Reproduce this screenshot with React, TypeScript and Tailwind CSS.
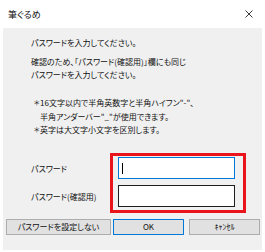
const font = "font-['Noto_Sans_CJK_JP',sans-serif] [font-feature-settings:'palt']";

const Field = ({ label, active }: { label: string; active?: boolean }) => (
  <div className="flex items-center">
    <span className="w-[87px] whitespace-nowrap">{label}</span>
    <div
      className={`w-[117px] h-[22px] bg-white flex items-center pl-[3px] ${
        active ? "border border-[#0078d7]" : "border border-[#1e1e1e]"
      }`}
    >
      {active && <span className="block w-px h-[11px] bg-black" />}
    </div>
  </div>
);

const Btn = ({ children, w, primary }: { children: React.ReactNode; w: string; primary?: boolean }) => (
  <button
    className={`${w} h-[16px] bg-[#e1e1e1] flex items-center justify-center text-[8px] leading-none ${
      primary ? "border border-[#0078d7]" : "border border-[#adadad]"
    }`}
  >
    {children}
  </button>
);

export default function App() {
  return (
    <div className={`w-[265px] h-[252px] bg-white flex flex-col text-[#111] ${font}`}>
      <div className="h-[28px] flex items-center justify-between pl-[8px] pr-[12px]">
        <span className="text-[9px] leading-none">筆ぐるめ</span>
        <svg width="8" height="8" viewBox="0 0 8 8" className="text-[#222]">
          <path d="M0.5 0.5 L7.5 7.5 M7.5 0.5 L0.5 7.5" stroke="currentColor" strokeWidth="0.9" />
        </svg>
      </div>

      <div className="relative flex-1 mx-[3px] mb-[2px] bg-[#f0f0f0] flex flex-col text-[8px] leading-[13px]">
        <div className="pl-[28px] pt-[8px] whitespace-nowrap">
          <p>パスワードを入力してください。</p>
          <p className="mt-[6px]">確認のため、「パスワード(確認用)」欄にも同じ</p>
          <p>パスワードを入力してください。</p>

          <div className="mt-[15px] flex">
            <span className="w-[9px] pl-[3px] text-[7px]">＊</span>
            <div>
              <p>16文字以内で半角英数字と半角ハイフン"-"、</p>
              <p className="mt-[1px]">半角アンダーバー"_"が使用できます。</p>
            </div>
          </div>
          <div className="flex">
            <span className="w-[9px] pl-[3px] text-[7px]">＊</span>
            <p>英字は大文字小文字を区別します。</p>
          </div>
        </div>

        <div className="pl-[28px] mt-[21px] flex flex-col gap-[6px]">
          <Field label="パスワード" active />
          <Field label="パスワード(確認用)" />
        </div>

        {/* red highlight around the inputs */}
        <div className="absolute left-[107px] top-[125px] w-[136px] h-[60px] border-[3px] border-[#e8131b]" />

        <div className="mt-[12px] pl-[3px] flex gap-[2px]">
          <Btn w="w-[105px]">パスワードを設定しない</Btn>
          <Btn w="w-[71px]" primary>OK</Btn>
          <div className="w-px" />
          <Btn w="w-[71px]">ｷｬﾝｾﾙ</Btn>
        </div>
      </div>
    </div>
  );
}
